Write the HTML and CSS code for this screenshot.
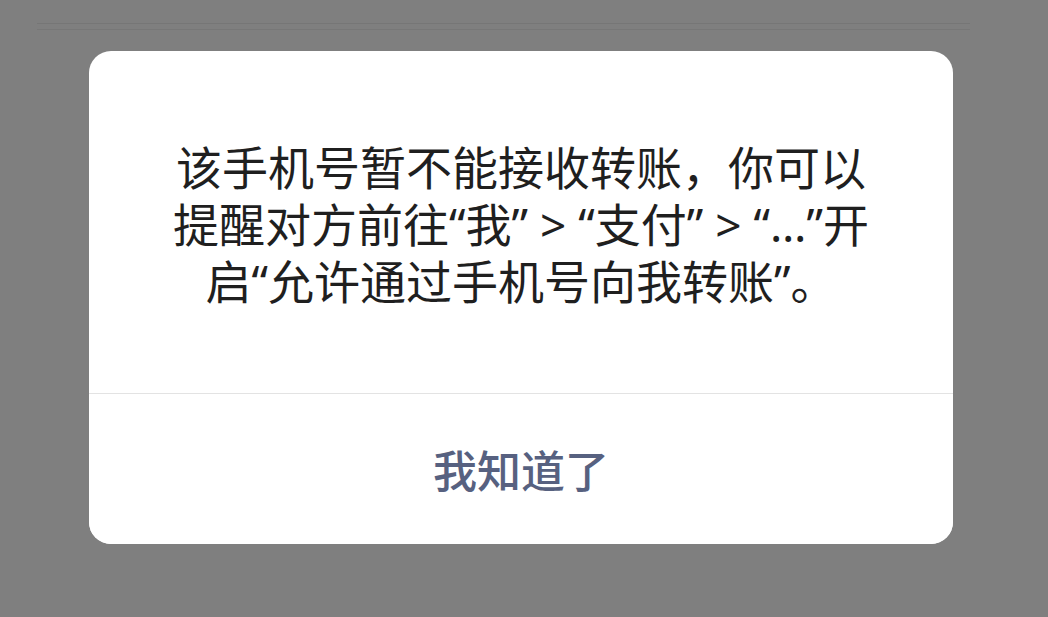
FILE: index.html
```html
<!DOCTYPE html>
<html lang="zh-CN">
<head>
  <meta charset="UTF-8">
  <meta name="viewport" content="width=device-width, initial-scale=1.0">
  <title>提示</title>
  <link rel="stylesheet" href="styles.css">
</head>
<body>
  <div class="backdrop">
    <div class="ghost-bar"></div>
    <div class="alert" role="alertdialog" aria-labelledby="alert-msg">
      <p class="alert-msg" id="alert-msg">该手机号暂不能接收转账，你可以<br>提醒对方前往“我” &gt; “支付” &gt; “…”开<br>启“允许通过手机号向我转账”。</p>
      <button class="alert-btn" type="button">我知道了</button>
    </div>
  </div>
</body>
</html>
```

FILE: styles.css
```css
:root { --mask: #7f7f7f; --text: #1f1f1f; --link: #576180; --line: #e3e3e3; }
body { margin:0; height:100vh; background: var(--mask); font-family:"Noto Sans CJK SC", "Noto Sans", sans-serif; overflow:hidden; }
.backdrop { padding-top:23px; }
/* faded list lines showing through the mask */
.ghost-bar { height:5px; margin:0 78px 0 37px; border-top:1px solid #767676; border-bottom:1px solid #777; }
.alert { width:864px; margin:21px 0 0 89px; background:#fff; border-radius:22px; overflow:hidden; display:flex; flex-direction:column; }
/* latin font first so the quotes and > stay narrow */
.alert-msg { margin:0; padding:88px 0 0; height:254px; box-sizing:content-box; text-align:center; font-family:"Noto Sans", "Noto Sans CJK SC", sans-serif; font-size:46px; line-height:57px; color: var(--text); border-bottom:1px solid var(--line); white-space:nowrap; }
.alert-btn { height:150px; border:none; background:#fff; font-family:inherit; font-size:44px; color: var(--link); font-weight:500; cursor:pointer; padding:0; }
```
